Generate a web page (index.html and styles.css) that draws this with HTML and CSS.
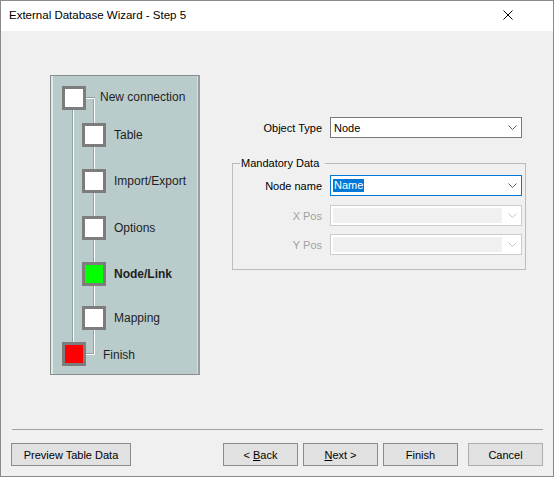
FILE: index.html
```html
<!DOCTYPE html>
<html>
<head>
<meta charset="utf-8">
<title>External Database Wizard - Step 5</title>
<link rel="stylesheet" href="styles.css">
</head>
<body>
<div class="window">
  <div class="titlebar">
    <span class="title">External Database Wizard - Step 5</span>
    <svg class="close" width="10" height="10" viewBox="0 0 10 10"><path d="M0.5 0.5 L9.5 9.5 M9.5 0.5 L0.5 9.5" stroke="#000" stroke-width="1" fill="none"/></svg>
  </div>
  <div class="main">
    <div class="steps">
      <svg class="connectors" width="148" height="298" viewBox="0 0 148 298">
        <path d="M35 22 H43 V278 H35 M22 34 V266" stroke="#8fa3a1" stroke-width="2" fill="none"/>
        <path d="M35 22.5 H43.5 V278.5 H35 M22.5 34 V266" stroke="#ffffff" stroke-width="1" fill="none"/>
      </svg>
      <div class="step lead s1"><span class="box"></span><span class="label">New connection</span></div>
      <div class="step sub s2"><span class="box"></span><span class="label">Table</span></div>
      <div class="step sub s3"><span class="box"></span><span class="label">Import/Export</span></div>
      <div class="step sub s4"><span class="box"></span><span class="label">Options</span></div>
      <div class="step sub s5 current"><span class="box green"></span><span class="label">Node/Link</span></div>
      <div class="step sub s6"><span class="box"></span><span class="label">Mapping</span></div>
      <div class="step lead finish s7"><span class="box red"></span><span class="label">Finish</span></div>
    </div>
    <div class="form">
      <div class="row">
        <span class="lbl">Object Type</span>
        <div class="combo">
          <span class="val">Node</span>
          <svg class="chev" width="9" height="5" viewBox="0 0 9 5"><path d="M0.5 0.5 L4.5 4.5 L8.5 0.5" stroke="#606060" fill="none"/></svg>
        </div>
      </div>
      <fieldset class="group">
        <legend>Mandatory Data</legend>
        <div class="row r1">
          <span class="lbl">Node name</span>
          <div class="combo focused">
            <span class="val"><span class="sel">Name</span></span>
            <svg class="chev" width="9" height="5" viewBox="0 0 9 5"><path d="M0.5 0.5 L4.5 4.5 L8.5 0.5" stroke="#606060" fill="none"/></svg>
          </div>
        </div>
        <div class="row r2">
          <span class="lbl disabled">X Pos</span>
          <div class="combo off">
            <span class="inner"></span>
            <svg class="chev" width="9" height="5" viewBox="0 0 9 5"><path d="M0.5 0.5 L4.5 4.5 L8.5 0.5" stroke="#c4c4c4" fill="none"/></svg>
          </div>
        </div>
        <div class="row r3">
          <span class="lbl disabled">Y Pos</span>
          <div class="combo off">
            <span class="inner"></span>
            <svg class="chev" width="9" height="5" viewBox="0 0 9 5"><path d="M0.5 0.5 L4.5 4.5 L8.5 0.5" stroke="#c4c4c4" fill="none"/></svg>
          </div>
        </div>
      </fieldset>
    </div>
  </div>
  <div class="separator"></div>
  <div class="footer">
    <button class="btn wide">Preview Table Data</button>
    <div class="spacer"></div>
    <button class="btn">&lt; <u>B</u>ack</button>
    <button class="btn"><u>N</u>ext &gt;</button>
    <button class="btn">Finish</button>
    <button class="btn cancel">Cancel</button>
  </div>
</div>
</body>
</html>
```
FILE: styles.css
```css
body {
  margin: 0;
  background: #ffffff;
  font-family: "Liberation Sans", Arial, sans-serif;
}

.window {
  width: 554px;
  height: 477px;
  box-sizing: border-box;
  border: 1px solid #8a8a8a;
  background: #f0f0f0;
  display: flex;
  flex-direction: column;
}

.titlebar {
  height: 30px;
  flex-shrink: 0;
  background: #ffffff;
  display: flex;
  align-items: flex-start;
}

.title {
  flex: 1;
  margin: 8px 0 0 8px;
  font-size: 11.5px;
  color: #000;
}

.close {
  margin: 9px 40px 0 0;
}

.main {
  height: 398px;
  flex-shrink: 0;
  display: flex;
  align-items: flex-start;
}

.steps {
  position: relative;
  margin: 44px 0 0 49px;
  width: 150px;
  height: 300px;
  box-sizing: border-box;
  border: 1px solid #878c8c;
  border-right: 2px solid #999d9d;
  background: #b9cccb;
  box-shadow: inset 2px 0 0 #dcebea, inset -1px 0 0 #d2dfde;
}

.connectors {
  position: absolute;
  left: 0;
  top: 0;
  z-index: 0;
}

.step {
  position: relative;
  z-index: 1;
  display: flex;
  align-items: center;
  height: 24px;
  font-size: 12px;
  color: #1f1f1f;
}

.box {
  width: 24px;
  height: 24px;
  box-sizing: border-box;
  border: 3px solid #7d7d7d;
  background: #ffffff;
  flex-shrink: 0;
}

.box.green { background: #00ff00; }
.box.red { background: #ff0000; }

.step.lead .box { margin-left: 11px; }
.step.lead .label { margin-left: 14px; margin-top: -2px; }
.step.sub .box { margin-left: 31px; }
.step.sub .label { margin-left: 8px; margin-top: -1px; }
.step.finish .label { margin-left: 17px; margin-top: 1px; }
.step.current .label { font-weight: bold; }

.s1 { margin-top: 10px; }
.s2 { margin-top: 13px; }
.s3 { margin-top: 22px; }
.s4 { margin-top: 23px; }
.s5 { margin-top: 22px; }
.s6 { margin-top: 20px; }
.s7 { margin-top: 12px; }

.form {
  margin: 86px 0 0 32px;
  width: 294px;
  font-size: 11px;
}

.row {
  display: flex;
  align-items: center;
  height: 21px;
}

.lbl {
  width: 90px;
  margin-right: 8px;
  text-align: right;
  color: #000;
}

.lbl.disabled { color: #a0a0a0; }

.group .lbl { width: 89px; }

.combo {
  width: 192px;
  height: 21px;
  box-sizing: border-box;
  border: 1px solid #7a7a7a;
  background: #ffffff;
  display: flex;
  align-items: center;
  padding: 0 2px;
}

.combo.focused { border-color: #0078d7; }

.combo.off {
  border-color: #cccccc;
  padding: 2px;
}

.val {
  flex: 1;
  padding-left: 1px;
  color: #000;
}

.sel {
  display: inline-block;
  background: #0078d7;
  color: #ffffff;
  line-height: 13px;
  padding: 0 1px;
  margin-left: -1px;
}

.inner {
  flex: 1;
  height: 15px;
  background: #f0f0f0;
}

.chev {
  margin: 0 2px 0 6px;
  flex-shrink: 0;
}

.group {
  margin: 18px 0 0 0;
  width: 294px;
  box-sizing: border-box;
  border: 1px solid #bcbcbc;
  padding: 0 2px 14px 0;
  min-width: 0;
}

.group legend {
  margin-left: 7px;
  padding: 0 6px 0 1px;
  line-height: 14px;
  font-size: 11px;
  color: #000;
}

.r1 { margin-top: 5px; }
.r2 { margin-top: 9px; }
.r3 { margin-top: 8px; }

.separator {
  height: 0;
  border-top: 1px solid #a0a0a0;
  margin: 0 10px 0 11px;
}

.footer {
  display: flex;
  padding: 13px 10px 0 10px;
}

.spacer { flex: 1; }

.btn {
  width: 75px;
  height: 23px;
  box-sizing: border-box;
  border: 1px solid #8c8c8c;
  background: #e1e1e1;
  font-family: "Liberation Sans", Arial, sans-serif;
  font-size: 11px;
  color: #000;
  padding: 0;
  margin-left: 5px;
}

.btn.wide {
  width: 120px;
  margin-left: 0;
}

.btn.cancel {
  border-color: #adadad;
  margin-left: 10px;
}
```
